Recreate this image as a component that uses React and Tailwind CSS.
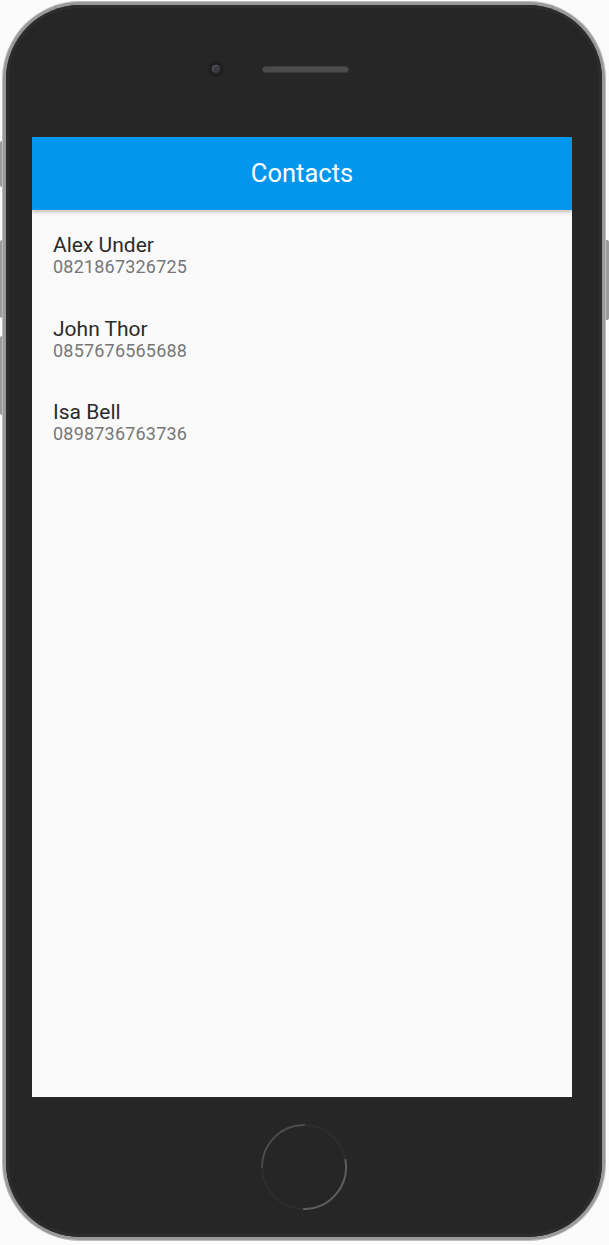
import React from "react";

const contacts = [
  { name: "Alex Under", phone: "0821867326725" },
  { name: "John Thor", phone: "0857676565688" },
  { name: "Isa Bell", phone: "0898736763736" },
];

// 홈 버튼 링: 왼쪽 위, 오른쪽 아래가 조금 더 밝다
const HomeButton = () => (
  <svg width="90" height="90" viewBox="0 0 90 90">
    <circle cx="45" cy="45" r="42" fill="none" stroke="#2f2f2f" strokeWidth="1.5" />
    <path d="M3 45 A42 42 0 0 1 45 3" fill="none" stroke="#4e4e4e" strokeWidth="1.8" strokeLinecap="round" />
    <path d="M86.4 38 A42 42 0 0 1 45 87" fill="none" stroke="#5e5e5e" strokeWidth="2" strokeLinecap="round" />
  </svg>
);

const ContactItem = ({ contact }) => (
  <div className="h-[83.5px] px-[21px] pt-[24px]">
    <div className="text-[21px] leading-[22px] text-[#2a2a2a]">{contact.name}</div>
    <div className="text-[18px] leading-[22px] tracking-[0.2px] text-[#777777]">
      {contact.phone}
    </div>
  </div>
);

export default function App() {
  return (
    <div className="relative w-[609px] h-[1245px] bg-[#fbfbfb] font-['Roboto','Liberation_Sans',sans-serif] overflow-hidden">
      {/* 옆 버튼들 */}
      <div className="absolute left-0 top-[141px] w-[4px] h-[46px] rounded-l-[2px] bg-[#9a9a9a]" />
      <div className="absolute left-0 top-[240px] w-[4px] h-[78px] rounded-l-[2px] bg-[#9a9a9a]" />
      <div className="absolute left-0 top-[336px] w-[4px] h-[79px] rounded-l-[2px] bg-[#9a9a9a]" />
      <div className="absolute right-0 top-[240px] w-[4px] h-[80px] rounded-r-[2px] bg-[#9a9a9a]" />

      {/* 폰 본체 */}
      <div className="relative ml-[2px] mt-[1px] w-[604px] h-[1240px] rounded-[78px] bg-[#bdbdbd] p-[1px]">
        <div className="h-full rounded-[77px] bg-[#999999] p-[3px]">
          <div className="h-full rounded-[74px] bg-[#262626] shadow-[inset_0_0_0_3px_#2d2d2d] flex flex-col">
            {/* 카메라, 스피커 */}
            <div className="h-[132px] flex items-start">
              <div className="mt-[56px] ml-[202px] flex items-center">
                <div className="w-[16px] h-[16px] rounded-full bg-[#202020] flex items-center justify-center">
                  <div className="w-[8px] h-[8px] rounded-full bg-[#3a3b44] shadow-[inset_1px_1px_1px_#55565f]" />
                </div>
                <div className="ml-[38px] w-[87px] h-[7px] rounded-full bg-[#4c4c4c] border border-[#3a3a3a]" />
              </div>
            </div>

            {/* 화면 */}
            <div className="ml-[26px] w-[540px] h-[960px] bg-[#fafafa] flex flex-col overflow-hidden">
              <div className="h-[73px] bg-[#0297ed] shadow-[0_2px_4px_rgba(0,0,0,0.25)] flex items-center justify-center relative z-10">
                <span className="text-[25.5px] text-white">Contacts</span>
              </div>
              <div className="flex flex-col">
                {contacts.map((c) => (
                  <ContactItem key={c.phone} contact={c} />
                ))}
              </div>
            </div>

            {/* 홈 버튼 */}
            <div className="flex-1 flex items-center justify-center">
              <HomeButton />
            </div>
          </div>
        </div>
      </div>
    </div>
  );
}
